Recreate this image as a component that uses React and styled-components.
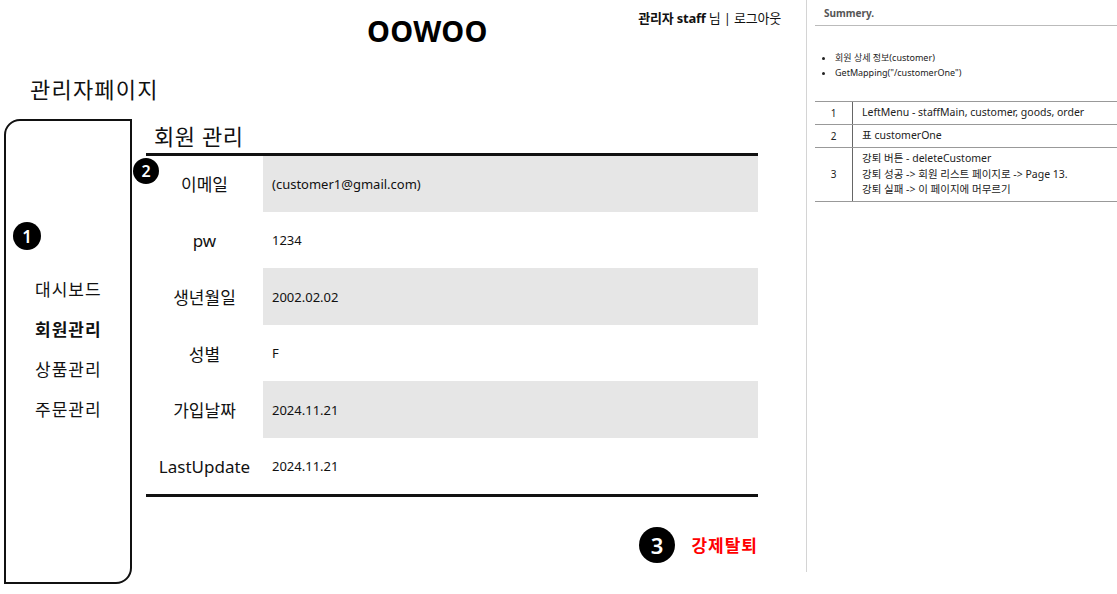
import React from "react";
import styled, { createGlobalStyle } from "styled-components";

const Global = createGlobalStyle`
  html, body { margin: 0; padding: 0; background: #fff; }
  body {
    font-family: "Noto Sans", "Noto Sans CJK KR", sans-serif;
    color: #111;
  }
  * { box-sizing: border-box; }
`;

const Page = styled.div`
  display: flex;
  width: 1117px;
  height: 594px;
  overflow: hidden;
`;

const Main = styled.div`
  width: 806px;
  flex: none;
  display: flex;
  flex-direction: column;
`;

const TopBar = styled.header`
  display: grid;
  grid-template-columns: 367px auto 1fr;
  align-items: start;
  height: 70px;
`;

const Logo = styled.h1`
  grid-column: 2;
  margin: 12px 0 0;
  font-family: "Noto Sans", sans-serif;
  font-size: 29px;
  font-weight: 700;
  line-height: 38px;
  letter-spacing: 0.3px;
  color: #000;
`;

const UserInfo = styled.div`
  grid-column: 3;
  justify-self: end;
  margin: 9px 25px 0 0;
  font-size: 13px;
  line-height: 19px;
  letter-spacing: -0.2px;
  color: #111;
  b { font-weight: 700; }
`;

const PageTitle = styled.h2`
  margin: 4px 0 0 30px;
  font-size: 22px;
  font-weight: 400;
  line-height: 30px;
  letter-spacing: 1.2px;
  color: #111;
`;

const Body = styled.div`
  display: flex;
  align-items: flex-start;
  margin-top: 15px;
  padding-left: 4px;
`;

const Sidebar = styled.nav`
  position: relative;
  width: 128px;
  height: 465px;
  flex: none;
  border: 2.5px solid #111;
  border-radius: 16px 0 16px 0;
  padding: 157px 0 0 29px;
  display: flex;
  flex-direction: column;
  gap: 16px;
`;

const MenuItem = styled.div`
  font-size: 17px;
  line-height: 24px;
  letter-spacing: 1px;
  font-weight: ${(p) => (p.$active ? 700 : 400)};
  color: #111;
`;

const Badge = styled.span`
  position: absolute;
  width: ${(p) => p.$size}px;
  height: ${(p) => p.$size}px;
  border-radius: 50%;
  background: #000;
  color: #fff;
  font-size: ${(p) => Math.round(p.$size * 0.62)}px;
  font-weight: 600;
  display: flex;
  align-items: center;
  justify-content: center;
  line-height: 1;
`;

const Section = styled.section`
  position: relative;
  width: 612px;
  margin-left: 14px;
  display: flex;
  flex-direction: column;
`;

const SectionTitle = styled.h3`
  margin: 0 0 0 8px;
  font-size: 22px;
  font-weight: 400;
  line-height: 34px;
  letter-spacing: 0.6px;
  color: #111;
`;

const Table = styled.div`
  border-top: 3px solid #111;
  border-bottom: 3px solid #111;
  display: flex;
  flex-direction: column;
`;

const Row = styled.div`
  display: grid;
  grid-template-columns: 117px 1fr;
  height: ${(p) => p.$h}px;
  align-items: stretch;
`;

const Label = styled.div`
  display: flex;
  align-items: center;
  justify-content: center;
  font-size: 17px;
  color: #111;
  padding-bottom: ${(p) => (p.$first ? 2 : 0)}px;
`;

const Value = styled.div`
  display: flex;
  align-items: center;
  padding-left: 9px;
  font-size: 13px;
  color: #111;
  background: ${(p) => (p.$shaded ? "#e6e6e6" : "transparent")};
`;

const Actions = styled.div`
  display: flex;
  justify-content: flex-end;
  align-items: center;
  margin-top: 32px;
  height: 30px;
`;

const DangerButton = styled.button`
  border: 0;
  background: none;
  padding: 0;
  font-family: inherit;
  font-size: 17px;
  font-weight: 700;
  letter-spacing: 1px;
  color: #ff0000;
  cursor: pointer;
`;

const Panel = styled.aside`
  flex: 1;
  border-left: 1px solid #d4d4d4;
  height: 572px;
  padding: 0 0 0 8px;
  display: flex;
  flex-direction: column;
`;

const PanelHead = styled.div`
  font-size: 10px;
  font-weight: 700;
  color: #555;
  padding: 6px 0 0 9px;
  height: 26px;
  border-bottom: 1px solid #bbb;
`;

const BulletList = styled.ul`
  margin: 24px 0 0;
  padding: 0 0 0 20px;
  font-size: 9px;
  line-height: 15px;
  color: #222;
`;

const SumTable = styled.div`
  margin-top: 21px;
  border-top: 1px solid #999;
  display: flex;
  flex-direction: column;
`;

const SumRow = styled.div`
  display: grid;
  grid-template-columns: 38px 1fr;
  border-bottom: 1px solid #999;
  min-height: 23px;
`;

const SumNum = styled.div`
  display: flex;
  align-items: center;
  justify-content: center;
  border-right: 1px solid #666;
  font-size: 10px;
  color: #222;
`;

const SumText = styled.div`
  display: flex;
  flex-direction: column;
  justify-content: center;
  padding: 3px 0 3px 9px;
  font-size: 10.5px;
  line-height: 15.5px;
  color: #222;
`;

const rows = [
  ["이메일", "(customer1@gmail.com)", 56],
  ["pw", "1234", 56],
  ["생년월일", "2002.02.02", 57],
  ["성별", "F", 56],
  ["가입날짜", "2024.11.21", 57],
  ["LastUpdate", "2024.11.21", 56],
];

export default function App() {
  return (
    <>
      <Global />
      <Page>
        <Main>
          <TopBar>
            <Logo>OOWOO</Logo>
            <UserInfo>
              <b>관리자 staff</b> 님 | 로그아웃
            </UserInfo>
          </TopBar>
          <PageTitle>관리자페이지</PageTitle>
          <Body>
            <Sidebar>
              <Badge $size={28} style={{ left: 7, top: 101 }}>1</Badge>
              <MenuItem>대시보드</MenuItem>
              <MenuItem $active>회원관리</MenuItem>
              <MenuItem>상품관리</MenuItem>
              <MenuItem>주문관리</MenuItem>
            </Sidebar>
            <Section>
              <SectionTitle>회원 관리</SectionTitle>
              <Badge $size={26} style={{ left: -13, top: 39 }}>2</Badge>
              <Table>
                {rows.map(([k, v, h], i) => (
                  <Row key={k} $h={h}>
                    <Label $first={i === 0}>{k}</Label>
                    <Value $shaded={i % 2 === 0}>{v}</Value>
                  </Row>
                ))}
              </Table>
              <Actions>
                <Badge $size={36} style={{ left: 493, top: 408 }}>3</Badge>
                <DangerButton>강제탈퇴</DangerButton>
              </Actions>
            </Section>
          </Body>
        </Main>
        <Panel>
          <PanelHead>Summery.</PanelHead>
          <BulletList>
            <li>회원 상세 정보(customer)</li>
            <li>GetMapping("/customerOne")</li>
          </BulletList>
          <SumTable>
            <SumRow>
              <SumNum>1</SumNum>
              <SumText>LeftMenu - staffMain, customer, goods, order</SumText>
            </SumRow>
            <SumRow>
              <SumNum>2</SumNum>
              <SumText>표 customerOne</SumText>
            </SumRow>
            <SumRow>
              <SumNum>3</SumNum>
              <SumText>
                <span>강퇴 버튼 - deleteCustomer</span>
                <span>강퇴 성공 -&gt; 회원 리스트 페이지로 -&gt; Page 13.</span>
                <span>강퇴 실패 -&gt; 이 페이지에 머무르기</span>
              </SumText>
            </SumRow>
          </SumTable>
        </Panel>
      </Page>
    </>
  );
}
